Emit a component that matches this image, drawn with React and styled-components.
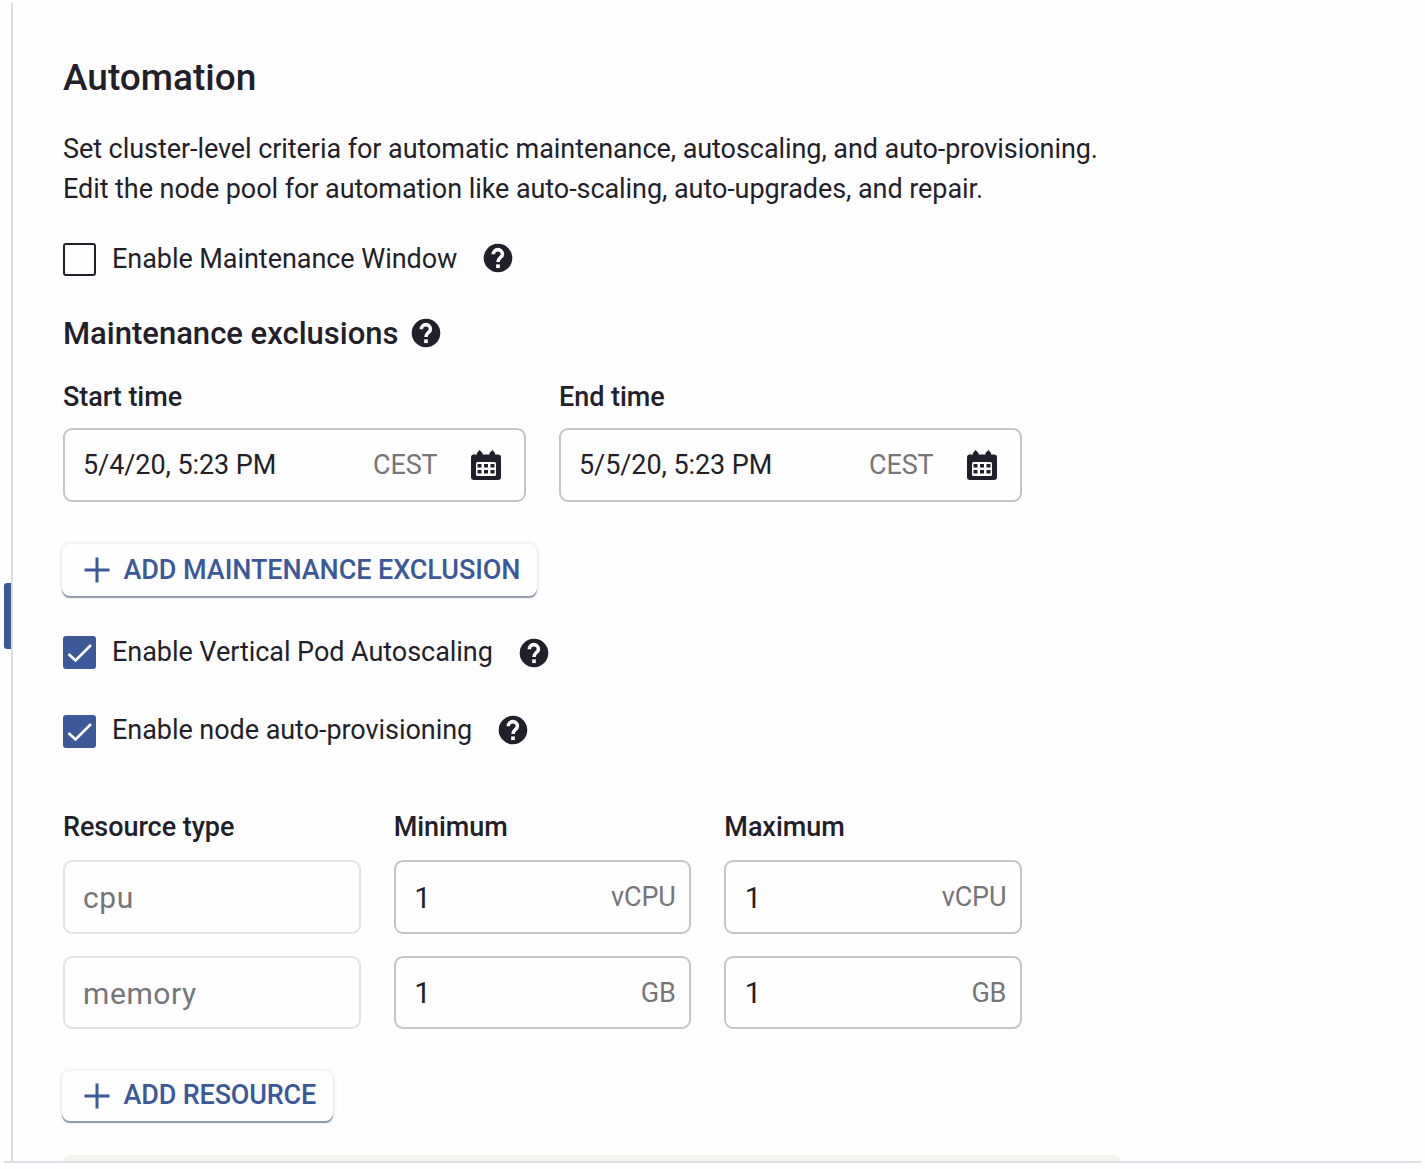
import React from "react";
import styled, { createGlobalStyle, css } from "styled-components";

const ink = "#231f2a";
const blue = "#3b5998";
const muted = "#75757a";
const paper = "#fefefe";

const GlobalStyle = createGlobalStyle`
  *, *::before, *::after { box-sizing: border-box; }
  body { margin: 0; background: ${paper}; color: ${ink}; font-family: Roboto, "Liberation Sans", sans-serif; }
`;

const Frame = styled.div`
  display: flex;
  width: 1417px;
  height: 1160px;
  margin: 3px 4px 0;
  border-bottom: 2px solid #d9dfe7;
  overflow: hidden;
`;
const Rail = styled.div`
  flex: none;
  width: 7px;
  padding-top: 580px;
`;
const Handle = styled.div`
  height: 66px;
  border-radius: 3px 0 0 3px;
  background: ${blue};
`;
const Content = styled.main`
  flex: 1;
  padding: 50px 0 0 50px;
  border-left: 2px solid #d9dfe7;
`;
const Title = styled.h1`
  margin: 0;
  font-size: 37px;
  font-weight: 500;
  line-height: 49px;
`;
const Description = styled.p`
  margin: 27px 0 0;
  font-size: 27px;
  line-height: 40px;
  letter-spacing: -0.065px;
`;
const CheckRow = styled.div`
  display: flex;
  align-items: center;
  height: 33px;
  margin-top: ${(p) => p.$top}px;
  font-size: 27px;
  letter-spacing: -0.05px;
`;
const Box = styled.span`
  display: grid;
  place-items: center;
  width: 33px;
  height: 33px;
  margin-right: 16px;
  border-radius: 3px;
  border: 2px solid ${(p) => (p.$checked ? blue : ink)};
  background: ${(p) => (p.$checked ? blue : "transparent")};
`;
const CheckLabel = styled.span`
  margin-right: 24px;
  padding-bottom: ${(p) => p.$lift || 0}px;
  line-height: 33px;
`;
const HelpSvg = styled.svg`
  flex: none;
  width: 34px;
  height: 34px;
  margin-bottom: ${(p) => p.$lift || 0}px;
`;
const Subheading = styled.h2`
  display: flex;
  align-items: center;
  gap: 10px;
  height: 40px;
  margin: 37px 0 0;
  font-size: 31px;
  font-weight: 500;
`;
const Grid = styled.div`
  display: grid;
  grid-template-columns: repeat(${(p) => p.$cols}, 1fr);
  column-gap: 33px;
  width: 959px;
  margin-top: ${(p) => p.$top}px;
`;
const FieldLabel = styled.div`
  font-size: 27px;
  font-weight: 500;
  line-height: 32px;
  letter-spacing: -0.06px;
`;
const Field = styled.div`
  display: flex;
  align-items: center;
  height: ${(p) => p.$height || 74}px;
  padding: 0 13px 0 18px;
  border: 2px solid #c3c6ca;
  border-radius: 9px;
  font-size: 27px;
  ${(p) => p.$disabled && css`
    border-color: #e0e4e5;
    color: ${muted};
  `}
`;
const DateValue = styled.span`
  letter-spacing: -0.07px;
`;
const Value = styled.span`
  padding: 1px 0 0 0.5px;
  font-size: 29.5px;
`;
const ResourceName = styled.span`
  padding-top: 1px;
  font-size: 30px;
  letter-spacing: 0.6px;
`;
const Unit = styled.span`
  margin-left: auto;
  padding-right: ${(p) => p.$inset || 0}px;
  letter-spacing: -0.15px;
  color: ${muted};
`;
const CalendarSvg = styled.svg`
  flex: none;
  margin: 0 10.5px 0 33px;
`;
const Button = styled.button`
  display: flex;
  align-items: center;
  gap: 13.5px;
  width: ${(p) => p.$width}px;
  height: ${(p) => p.$height}px;
  margin: 42px 0 0 -1px;
  padding: 0 0 0 22px;
  border: 0;
  border-radius: 8px;
  background: ${paper};
  box-shadow: 0 2px 1px -0.5px #8d99ab, 0 0 4px 1px #ecebe6;
  color: ${blue};
  font: 500 27px Roboto, "Liberation Sans", sans-serif;
  letter-spacing: ${(p) => p.$spacing}px;
`;
const ButtonText = styled.span`
  padding-bottom: ${(p) => p.$lift || 0}px;
`;
const Strip = styled.div`
  width: 1057px;
  height: 6px;
  margin-top: 34px;
  border-radius: 6px 6px 0 0;
  background: #f3f4ee;
`;

const Tick = () => (
  <svg width="27" height="27" viewBox="0 0 27 27" fill="none" stroke="#fff" strokeWidth="2.7">
    <path d="M2.500 15 9.500 21.500 25 6" />
  </svg>
);
const Plus = () => (
  <svg width="26" height="26" viewBox="0 0 26 26" stroke={blue} strokeWidth="3">
    <path d="M0.500 13h25M13 0.500v25" />
  </svg>
);
const Help = ({ lift }) => (
  <HelpSvg $lift={lift} viewBox="0 0 24 24">
    <circle cx="12" cy="12" r="10.1" fill={ink} />
    <path d="M8.700 9.300a3.200 3.200 0 1 1 6.400 0c0 2.300-3.100 2.600-3.100 5.500" fill="none" stroke="#fff" strokeWidth="2.500" />
    <rect x="10.700" y="16.500" width="2.600" height="2.600" fill="#fff" />
  </HelpSvg>
);
const Calendar = () => (
  <CalendarSvg width="30" height="30" viewBox="0 0 30 30">
    <path
      fill={ink}
      d="M3 4.500h3V3L8.500 0 11.500 3v1.500h7V3L21.500 0 24 3v1.500h3a3 3 0 0 1 3 3V27a3 3 0 0 1-3 3H3a3 3 0 0 1-3-3V7.500a3 3 0 0 1 3-3z"
    />
    <rect x="5" y="12" width="20" height="14" rx="1.500" fill={paper} />
    <path
      fill={ink}
      d="M6.500 14h4v3.500h-4zM13 14h4v3.500h-4zM19.500 14h4v3.500h-4zM6.500 20h4v3.500h-4zM13 20h4v3.500h-4zM19.500 20h4v3.500h-4z"
    />
  </CalendarSvg>
);

const Check = ({ label, checked, top, lift, helpLift }) => (
  <CheckRow $top={top}>
    <Box $checked={checked}>{checked && <Tick />}</Box>
    <CheckLabel $lift={lift}>{label}</CheckLabel>
    <Help lift={helpLift} />
  </CheckRow>
);

const DateField = ({ value }) => (
  <Field>
    <DateValue>{value}</DateValue>
    <Unit>CEST</Unit>
    <Calendar />
  </Field>
);

const ResourceRow = ({ name, unit, top, height }) => (
  <Grid $cols={3} $top={top}>
    <Field $disabled $height={height}><ResourceName>{name}</ResourceName></Field>
    <Field $height={height}><Value>1</Value><Unit $inset={0.7}>{unit}</Unit></Field>
    <Field $height={height}><Value>1</Value><Unit $inset={0.7}>{unit}</Unit></Field>
  </Grid>
);

export default function App() {
  return (
    <>
      <GlobalStyle />
      <Frame>
        <Rail><Handle /></Rail>
        <Content>
          <Title>Automation</Title>
          <Description>
            Set cluster-level criteria for automatic maintenance, autoscaling, and auto-provisioning.
            <br />
            Edit the node pool for automation like auto-scaling, auto-upgrades, and repair.
          </Description>
          <Check label="Enable Maintenance Window" top={34} helpLift={3} />
          <Subheading>Maintenance exclusions<Help /></Subheading>
          <Grid $cols={2} $top={28}>
            <FieldLabel>Start time</FieldLabel>
            <FieldLabel>End time</FieldLabel>
          </Grid>
          <Grid $cols={2} $top={15}>
            <DateField value="5/4/20, 5:23 PM" />
            <DateField value="5/5/20, 5:23 PM" />
          </Grid>
          <Button $width={475} $height={52} $spacing={-0.08}>
            <Plus /><ButtonText>ADD MAINTENANCE EXCLUSION</ButtonText>
          </Button>
          <Check label="Enable Vertical Pod Autoscaling" checked top={40} />
          <Check label="Enable node auto-provisioning" checked top={46} lift={3} helpLift={3} />
          <Grid $cols={3} $top={63}>
            <FieldLabel>Resource type</FieldLabel>
            <FieldLabel>Minimum</FieldLabel>
            <FieldLabel>Maximum</FieldLabel>
          </Grid>
          <ResourceRow name="cpu" unit="vCPU" top={17} height={74} />
          <ResourceRow name="memory" unit="GB" top={22} height={73} />
          <Button $width={271} $height={50} $spacing={-0.16}>
            <Plus /><ButtonText $lift={1.5}>ADD RESOURCE</ButtonText>
          </Button>
          <Strip />
        </Content>
      </Frame>
    </>
  );
}
